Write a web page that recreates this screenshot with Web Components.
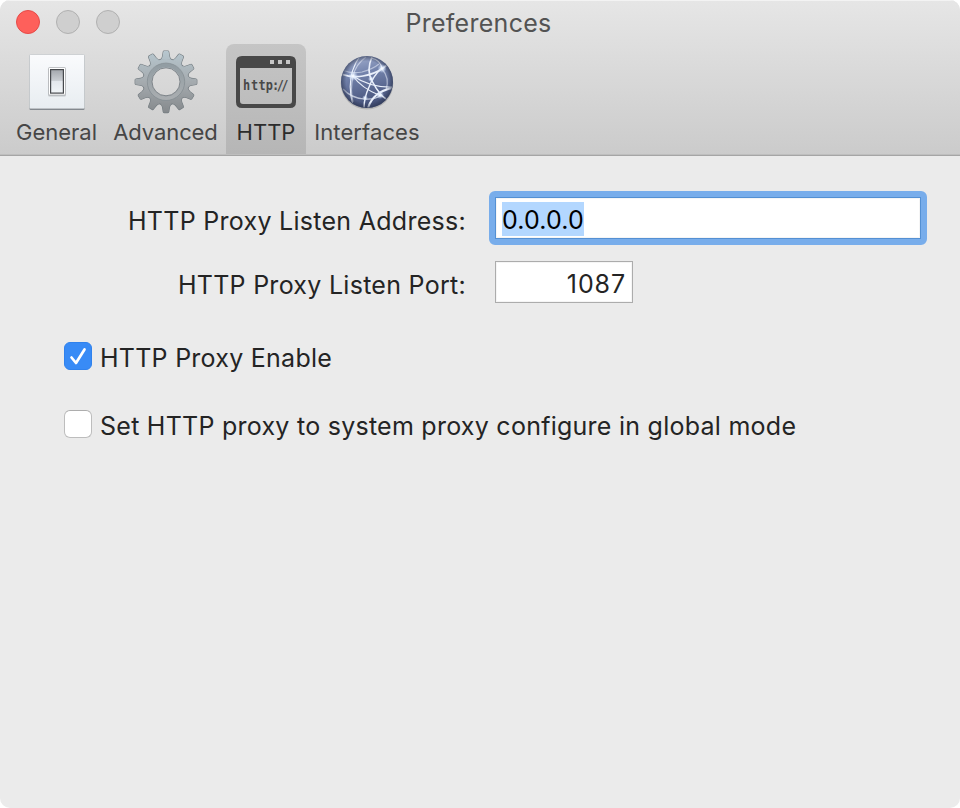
<!DOCTYPE html>
<html lang="en"><head><meta charset="utf-8"><title>Preferences</title>
<style>html,body{margin:0;background:#fff;font-family:Inter,"Liberation Sans",sans-serif}</style></head>
<body>
<mac-window></mac-window>
<script>
const define=(name,html)=>customElements.define(name,class extends HTMLElement{
  constructor(){super();this.attachShadow({mode:'open'}).innerHTML=html;}
});

define('traffic-lights',`<style>
:host{display:flex;gap:16px}
i{box-sizing:border-box;width:24px;height:24px;border-radius:50%;background:#cfcfcf;border:1px solid #b0b0b0}
.close{background:#fe605b;border-color:#e64a48}
</style><i class="close"></i><i></i><i></i>`);

define('tool-tab',`<style>
:host{box-sizing:border-box;display:flex;flex-direction:column;align-items:center;height:110px;padding-top:6px;border-radius:8px 8px 0 0;color:#464646}
:host([selected]){background:linear-gradient(#c5c5c5,#b6b6b6);color:#2c2c2c}
.icon{height:64px;display:flex;align-items:center}
.label{font-size:22px;line-height:28px;margin-top:4px;white-space:nowrap;letter-spacing:var(--track,0)}
</style><div class="icon"><slot name="icon"></slot></div><div class="label"><slot></slot></div>`);

define('icon-switch',`<style>:host,svg{display:block}</style>
<svg width="60" height="64" viewBox="0 0 60 64"><defs>
<linearGradient id="p" x2="0" y2="1"><stop stop-color="#fafbfd"/><stop offset="1" stop-color="#e8edf1"/></linearGradient>
<linearGradient id="r" x2="0" y2="1"><stop stop-color="#a3a7ad"/><stop offset=".46" stop-color="#c9cdd2"/><stop offset=".5" stop-color="#e3e7ec"/><stop offset="1" stop-color="#f1f5f8"/></linearGradient></defs>
<rect x="2.5" y="5" width="55" height="55" rx="1" fill="#84898f"/>
<rect x="2.5" y="4.500" width="55" height="54" rx="1" fill="url(#p)" stroke="#c2c5c9" stroke-width=".7"/>
<rect x="21" y="18" width="18" height="28.500" rx="1.500" fill="#9b9fa3" opacity=".5"/>
<rect x="21.500" y="17.500" width="17" height="27.500" rx="1" fill="#fff" stroke="#a8abae" stroke-width=".7"/>
<rect x="23.600" y="19.600" width="12.800" height="23.500" fill="url(#r)" stroke="#46494d" stroke-width="1.200"/></svg>`);

const teeth=Array.from({length:12},(_,i)=>`<path transform="rotate(${i*30})" d="M-5.500-22Q-3.600-23.500-3.400-25.500L-2.700-30Q-2.600-30.800-1.800-30.800H1.800Q2.600-30.800 2.700-30L3.400-25.500Q3.600-23.500 5.500-22Z"/>`).join('');
define('icon-gear',`<style>:host,svg{display:block}</style>
<svg width="66" height="64" viewBox="-33 -32 66 64"><defs>
<linearGradient id="n" x2="0" y2="1"><stop stop-color="#929da3"/><stop offset="1" stop-color="#a9adb0"/></linearGradient>
<linearGradient id="g" gradientUnits="userSpaceOnUse" x1="0" y1="-31" x2="0" y2="31"><stop stop-color="#b7c7cf"/><stop offset=".5" stop-color="#a5abaf"/><stop offset="1" stop-color="#85898c"/></linearGradient>
<mask id="m" maskUnits="userSpaceOnUse" x="-33" y="-33" width="66" height="66"><rect x="-33" y="-33" width="66" height="66" fill="#fff"/><circle r="14" fill="#000"/></mask>
<mask id="k" maskUnits="userSpaceOnUse" x="-33" y="-33" width="66" height="66"><g fill="#fff">${teeth}<circle r="22.800"/></g></mask></defs>
<g transform="translate(0 -.2)"><g mask="url(#m)"><g fill="#747c81" stroke="#747c81" stroke-width="1.200">${teeth}<circle r="22.800"/></g><rect x="-32" y="-32" width="64" height="64" fill="url(#g)" mask="url(#k)"/>
<circle r="16.500" fill="none" stroke="url(#n)" stroke-width="4"/><circle r="18.700" fill="none" stroke="#858e93" stroke-width=".8"/></g>
<circle r="14" fill="none" stroke="#777e83" stroke-width=".9"/></g></svg>`);

define('icon-http',`<style>:host,svg{display:block}text{font:bold 13.5px "DejaVu Sans Mono",monospace}</style>
<svg width="60" height="64" viewBox="0 0 60 64"><path fill="#484848" fill-rule="evenodd" d="M6 6H54Q60 6 60 12V52Q60 58 54 58H6Q0 58 0 52V12Q0 6 6 6ZM4 18V51Q4 54 7 54H53Q56 54 56 51V18Z"/>
<path fill="#c8c8c8" d="M34 10h4v4h-4zM42 10h4v4h-4zM50 10h4v4h-4z"/>
<text transform="translate(7 40) scale(.88 1)" x="0 9 17.500 26 33 38.300 43.600" y="0" fill="#484848">http://</text></svg>`);

define('icon-globe',`<style>:host,svg{display:block}</style>
<svg width="60" height="64" viewBox="-30 -32 60 64"><defs>
<linearGradient id="b" x2=".25" y2="1"><stop stop-color="#a9b4d2"/><stop offset=".4" stop-color="#7484ad"/><stop offset="1" stop-color="#46527a"/></linearGradient>
<radialGradient id="e"><stop offset=".8" stop-color="#27304a" stop-opacity="0"/><stop offset="1" stop-color="#27304a" stop-opacity=".6"/></radialGradient>
<radialGradient id="w"><stop stop-color="#fff"/><stop offset=".3" stop-color="#e9f2ff" stop-opacity=".85"/><stop offset="1" stop-color="#cfe0ff" stop-opacity="0"/></radialGradient>
<clipPath id="c"><circle r="25.500"/></clipPath></defs>
<ellipse cy="1.500" rx="26.300" ry="26" fill="#777" opacity=".35"/><circle r="26" fill="url(#b)"/>
<g clip-path="url(#c)" fill="none" stroke="#e9effa" stroke-width="1.200">
<path stroke-width="1.700" d="M-26-8Q-14-4-4-6Q8-8 16-14L24-20"/><path d="M-25-12Q-15-8-5-10Q6-13 12-18" opacity=".55"/>
<path d="M-7-26Q-22-5-14 24"/><path d="M-1-25Q-11-18-14-6Q-17 8-14 20" opacity=".6"/>
<path d="M5-25Q-1-12 5-1Q9 7 15 14L23 20" stroke-width="1.600"/><path d="M15-14Q6-6 2 5Q-3 16-3 26" stroke-width="1.500"/>
<path d="M-14-6Q-6 6 14 14"/><path d="M-14-6Q4 6 26 5"/>
<path d="M-24 7Q-16 16-3 17Q8 18 14 13" opacity=".7"/><path d="M1 26Q6 10 25 6" stroke-width="2"/>
<path d="M15-13Q23-4 19 8" opacity=".55"/><path d="M4-24Q14-22 15-13"/></g>
<circle r="26" fill="url(#e)"/><g fill="url(#w)"><circle cx="-14" cy="-6" r="5"/><circle cx="15" cy="-13.500" r="4.500"/><circle cx="13" cy="13" r="4"/><circle cx="-2" cy="16" r="3"/><circle cx="4" cy="-3" r="3"/></g></svg>`);

define('mac-field',`<style>
:host{box-sizing:border-box;display:flex;align-items:flex-start;height:42px;border:1px solid #acacac;background:#fff;padding:4px 6px 0;font-size:25px;color:#242424;box-shadow:inset 0 0 0 1px #f5f5f5}
:host([focused]){border-color:#5490d3;color:#000;position:relative}
:host([focused])::before{content:"";position:absolute;inset:-7px;border:6px solid #78adeb;border-radius:6px}
:host([numeric]){justify-content:flex-end}
:host([focused]) span{background:#b3d7ff}
span{line-height:31px;padding-top:3px;letter-spacing:var(--track,0)}
</style><span><slot></slot></span>`);

define('mac-check',`<style>
:host{display:flex;align-items:center;gap:8px;height:32px;font-size:25px;line-height:32px;color:#242424}
.box{box-sizing:border-box;width:28px;height:28px;border:1px solid #bdbdbd;border-top-color:#adadad;border-radius:6px;background:#fff;margin-top:-4px}
:host([checked]) .box{background:#388bf6;border-color:#3082ed}
svg{display:none;margin:-1px}:host([checked]) svg{display:block}
.text{letter-spacing:.255px;white-space:nowrap}
</style><div class="box"><svg width="28" height="28"><path d="M7.500 15.500L12 21L20.500 7.500" fill="none" stroke="#fff" stroke-width="2.700" stroke-linecap="round" stroke-linejoin="round"/></svg></div><div class="text"><slot></slot></div>`);

define('mac-window',`<style>
:host{display:flex;flex-direction:column;height:808px;width:960px;border-radius:10px;overflow:hidden;background:#ebebeb}
header{box-sizing:border-box;height:156px;background:linear-gradient(#e6e6e6,#cbcbcb);border-bottom:1px solid #a5a5a5;box-shadow:inset 0 1px #f3f3f3,inset 0 -1px #bebebe}
.title{display:grid;grid-template-columns:1fr auto 1fr;align-items:center;height:44px;padding:0 19px 0 16px}
h1{margin:2px 0 0;font-size:25px;line-height:32px;font-weight:400;color:#535353;letter-spacing:.28px}
nav{display:flex;padding-left:8px}
main{padding:41px 39px 0 64px}
.form{display:grid;grid-template-columns:402px 426px;column-gap:29px;row-gap:22px;font-size:25px;color:#242424}
label{text-align:right;line-height:48px;height:42px;white-space:nowrap;letter-spacing:.28px}
.checks{display:flex;flex-direction:column;gap:36px;margin-top:39px}
</style>
<header><div class="title"><traffic-lights></traffic-lights><h1>Preferences</h1></div>
<nav>
<tool-tab style="width:97px"><icon-switch slot="icon" style="margin-left:1px"></icon-switch>General</tool-tab>
<tool-tab style="width:121px;--track:-.1px"><icon-gear slot="icon"></icon-gear>Advanced</tool-tab>
<tool-tab selected style="width:80px"><icon-http slot="icon"></icon-http>HTTP</tool-tab>
<tool-tab style="width:122px;--track:.1px"><icon-globe slot="icon"></icon-globe>Interfaces</tool-tab>
</nav></header>
<main><div class="form">
<label>HTTP Proxy Listen Address:</label><mac-field focused style="--track:.15px">0.0.0.0</mac-field>
<label>HTTP Proxy Listen Port:</label><mac-field numeric style="width:138px;--track:.9px">1087</mac-field>
</div><div class="checks">
<mac-check checked>HTTP Proxy Enable</mac-check>
<mac-check>Set HTTP proxy to system proxy configure in global mode</mac-check>
</div></main>`);
</script></body></html>
